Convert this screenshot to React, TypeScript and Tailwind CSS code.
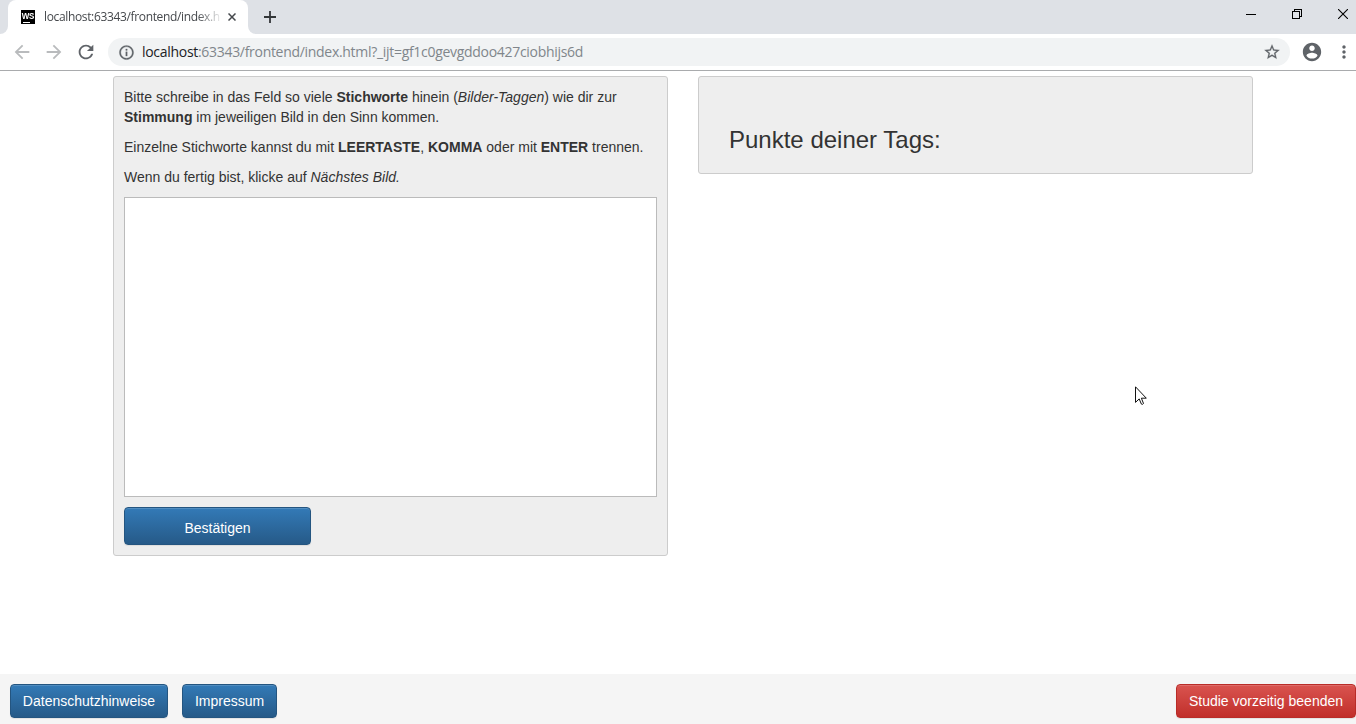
import type { ReactNode } from "react";
import {
  MdArrowBack,
  MdArrowForward,
  MdInfoOutline,
  MdMoreVert,
  MdRefresh,
  MdStarBorder,
} from "react-icons/md";

const ui = "font-['Open_Sans','Noto_Sans',sans-serif]";

function TabStrip() {
  return (
    <div className="flex h-[34px] justify-between bg-[#dee1e6]">
      <div className="flex">
        <div className="flex w-2 items-end bg-white">
          <div className="h-[34px] w-2 rounded-br-lg bg-[#dee1e6]" />
        </div>
        <div className="flex h-[34px] w-[240px] rounded-t-lg bg-[#dee1e6]">
          <div className="flex w-full items-center rounded-t-lg bg-white pl-[13px]">
            <div className="flex h-[14px] w-[14px] shrink-0 flex-col items-center bg-black">
              <span className="h-[12px] origin-top scale-y-[1.15] font-['Liberation_Sans',Arial,sans-serif] text-[8px] font-bold leading-[11px] tracking-[-0.2px] text-white">
                WS
              </span>
              <span className="ml-[2px] h-px w-[7px] self-start bg-white" />
            </div>
            <div
              className={`ml-[9px] w-[176px] whitespace-nowrap text-[12px] leading-[18px] text-[#45484c] [mask-image:linear-gradient(to_right,black_153px,transparent_179px)] ${ui}`}
            >
              <span className="tracking-[-0.35px]">localhost:63343/frontend/index.h</span>
            </div>
            <svg width="8" height="8" viewBox="0 0 8 8" className="ml-2 shrink-0">
              <path d="m.5.5 7 7m0-7-7 7" stroke="#45484c" strokeWidth="1.5" />
            </svg>
          </div>
        </div>
        <div className="w-2 bg-white">
          <div className="h-[34px] w-2 rounded-bl-lg bg-[#dee1e6]" />
        </div>
        <svg width="12" height="12" viewBox="0 0 12 12" className="ml-2 mt-[11px]">
          <path d="M6 0v12M0 6h12" stroke="#333639" strokeWidth="1.8" />
        </svg>
      </div>
      <div className="flex items-start pr-[8px] pt-[9px]">
        <svg width="10" height="11" viewBox="0 0 10 11" className="mr-9" shapeRendering="crispEdges">
          <path d="M0 5.5h10" stroke="#000" />
        </svg>
        <svg width="10" height="10" viewBox="0 0 10 10" className="mr-9" shapeRendering="crispEdges">
          <path d="M.5 2.5h7v7h-7zM2.5 2V.5h7v7H8" fill="none" stroke="#000" />
        </svg>
        <svg width="10" height="10" viewBox="0 0 10 10">
          <path d="m0 0 10 10M10 0 0 10" stroke="#000" strokeWidth="1.1" />
        </svg>
      </div>
    </div>
  );
}

function AccountIcon() {
  return (
    <svg width="22" height="22" viewBox="0 0 24 24" fill="currentColor" className="ml-[11px] shrink-0">
      <path d="M12 2C6.48 2 2 6.48 2 12s4.48 10 10 10 10-4.48 10-10S17.52 2 12 2zm0 3c1.66 0 3 1.34 3 3s-1.34 3-3 3-3-1.34-3-3 1.34-3 3-3zm0 14.2c-2.5 0-4.71-1.28-6-3.22.03-1.99 4-3.08 6-3.08 1.99 0 5.97 1.09 6 3.08-1.29 1.94-3.5 3.22-6 3.22z" />
    </svg>
  );
}

function Toolbar() {
  return (
    <div className="flex h-[37px] items-center border-b border-[#a9abad] bg-white pl-[11px] text-[#5f6368]">
      <MdArrowBack size={22} className="text-[#b9bbbd]" />
      <MdArrowForward size={22} className="ml-[10px] text-[#b9bbbd]" />
      <MdRefresh size={22} className="ml-[10px]" />
      <div className="ml-[11px] flex h-7 w-[1182px] items-center rounded-full bg-[#f1f3f4] pl-[10px] pr-[9px]">
        <MdInfoOutline size={17} className="[&>path:last-child]:[stroke-width:0.4]" />
        <div className={`ml-[7px] grow whitespace-nowrap text-[14px] leading-5 text-[#80868b] ${ui}`}>
          <span className="tracking-[-0.3px]">
            <span className="text-[#202124]">localhost</span>
            :63343/frontend/index.html?_ijt=gf1c0gevgddoo427ciobhijs6d
          </span>
        </div>
        <MdStarBorder size={18} className="[&>path:last-child]:[stroke-width:0.3]" />
      </div>
      <AccountIcon />
      <MdMoreVert size={20} className="ml-[11px] shrink-0" />
    </div>
  );
}

const buttonBase =
  "rounded border text-[14px] leading-5 text-white shadow-[inset_0_1px_0_rgba(255,255,255,0.15),0_1px_1px_rgba(0,0,0,0.075)] whitespace-nowrap bg-linear-to-b";

function Button({ tone, className, children }: { tone: "primary" | "danger"; className: string; children: ReactNode }) {
  const colors =
    tone === "primary"
      ? "border-[#245580] from-[#337ab7] to-[#265a88]"
      : "border-[#b92c28] from-[#d9534f] to-[#c12e2a]";
  return (
    <button type="button" className={`${buttonBase} ${colors} ${className}`}>
      {children}
    </button>
  );
}

export default function App() {
  return (
    <div className="flex h-[724px] w-[1356px] flex-col overflow-hidden bg-white font-['Liberation_Sans',Arial,sans-serif] text-[14px] leading-5 text-[#333]">
      <TabStrip />
      <Toolbar />
      <main className="flex grow items-start gap-[30px] pl-[113px] pt-[5px]">
        <section className="h-[480px] w-[555px] rounded-[3px] border border-[#ccc] bg-[#eee] p-[10px]">
          <p className="mb-[10px] whitespace-nowrap">
            Bitte schreibe in das Feld so viele <b>Stichworte</b> hinein (<i>Bilder-Taggen</i>) wie dir zur
            <br />
            <b>Stimmung</b> im jeweiligen Bild in den Sinn kommen.
          </p>
          <p className="mb-[10px] whitespace-nowrap">
            Einzelne Stichworte kannst du mit <b>LEERTASTE</b>, <b>KOMMA</b> oder mit <b>ENTER</b> trennen.
          </p>
          <p className="mb-[10px] whitespace-nowrap">
            Wenn du fertig bist, klicke auf <i>Nächstes Bild.</i>
          </p>
          <textarea className="block h-[300px] w-full resize-none border border-[#bbb] bg-white outline-none" />
          <Button tone="primary" className="mt-[10px] h-[38px] w-[187px] pt-[3px]">
            Bestätigen
          </Button>
        </section>
        <section className="h-[98px] w-[555px] rounded-[3px] border border-[#ccc] bg-[#eee] pl-[30px] pt-[50px]">
          <h3 className="text-[24px] leading-[26px]">Punkte deiner Tags:</h3>
        </section>
      </main>
      <footer className="flex h-[50px] shrink-0 items-center bg-[#f5f5f5] pl-[10px] pt-1">
        <Button tone="primary" className="h-[34px] w-[158px]">Datenschutzhinweise</Button>
        <Button tone="primary" className="ml-[14px] h-[34px] w-[95px]">Impressum</Button>
        <Button tone="danger" className="ml-auto h-[34px] w-[180px]">Studie vorzeitig beenden</Button>
      </footer>
      <svg width="12" height="20" viewBox="0 0 12 20" className="absolute left-[1135px] top-[386px]">
        <path
          d="M.5.8v15.6l3.7-3.5 2.2 5.2q1 .8 2.1-.6L6.4 12.2h4.9z"
          fill="#fff"
          stroke="#111"
          strokeWidth="1"
        />
      </svg>
    </div>
  );
}
